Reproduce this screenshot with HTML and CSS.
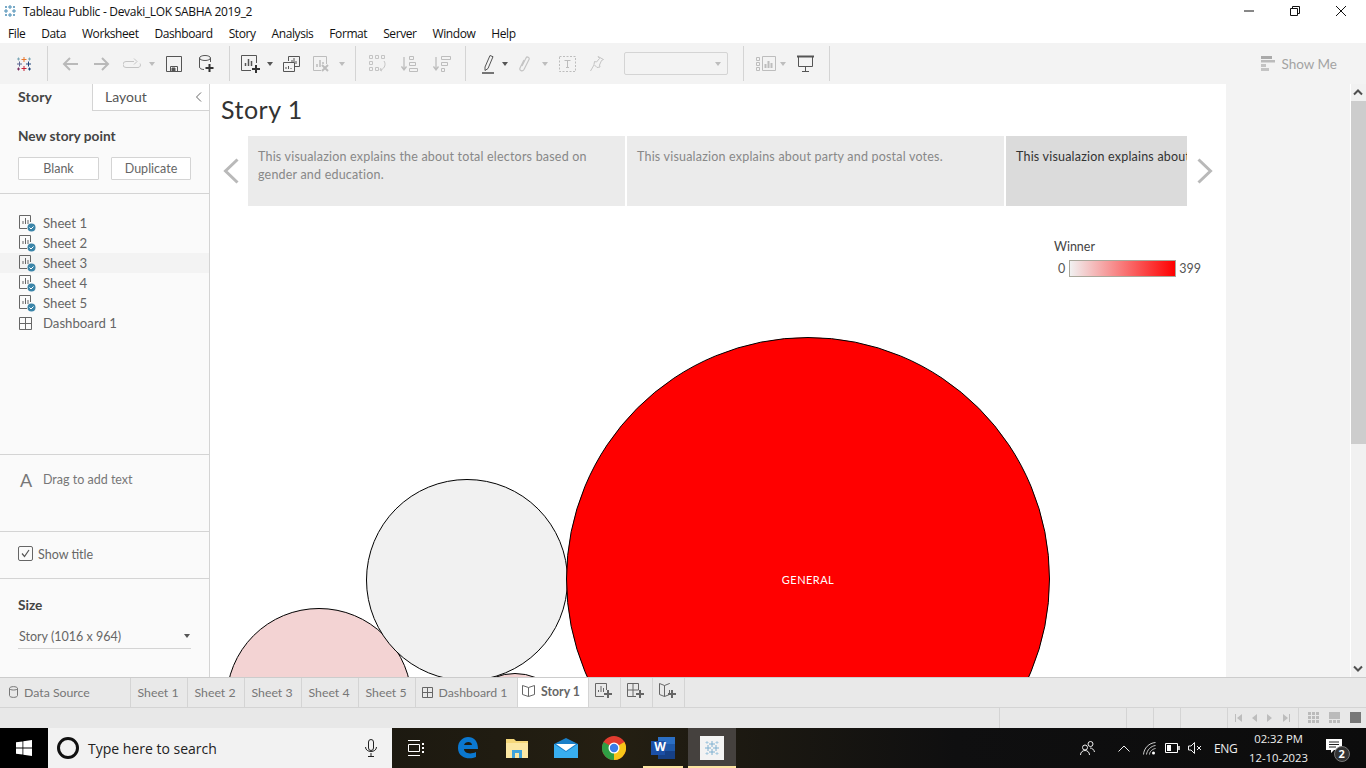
FILE: index.html
```html
<!DOCTYPE html>
<html lang="en">
	<head>
		<title>Tableau Public - Devaki_LOK SABHA 2019_2</title>
		<meta charset="utf-8">
		<link rel="stylesheet" href="styles.css">
	</head>
	<body>
		<!-- title bar -->
		<div class="titlebar">
			<svg class="app-icon" width="14" height="14" viewBox="0 0 14 14"><g stroke="#4a8db5" fill="none"><path d="M7 1v4M5 3h4M7 9v4M5 11h4M1 7h4M3 5v4M9 7h4M11 5v4"/><path d="M3 2v2M2 3h2M11 2v2M10 3h2M3 10v2M2 11h2M11 10v2M10 11h2"/></g></svg>
			<span class="app-title">Tableau Public - Devaki_LOK SABHA 2019_2</span>
			<div class="win-btns">
				<svg width="12" height="12" viewBox="0 0 12 12"><path d="M1 6h10" stroke="#111" fill="none"/></svg>
				<svg width="12" height="12" viewBox="0 0 12 12"><path d="M1.500 3.500h7v7h-7zM3.500 3.500v-2h7v7h-2" stroke="#111" fill="none"/></svg>
				<svg width="12" height="12" viewBox="0 0 12 12"><path d="M1 1l10 10M11 1L1 11" stroke="#111" fill="none"/></svg>
			</div>
		</div>

		<!-- menu -->
		<div class="menubar">
			<span>File</span><span>Data</span><span>Worksheet</span><span>Dashboard</span><span>Story</span><span>Analysis</span><span>Format</span><span>Server</span><span>Window</span><span>Help</span>
		</div>

		<!-- toolbar -->
		<div class="toolbar">
			<svg class="ml15" width="18" height="18" viewBox="0 0 18 18" fill="none"><path d="M9 2v5M6.500 4.500h5" stroke="#e8762b"/><path d="M9 11v5M6.500 13.500h5" stroke="#c72035"/><path d="M2 9h5M4.500 6.500v5" stroke="#5b6591"/><path d="M11 9h5M13.500 6.500v5" stroke="#1f447a"/><path d="M3.500 2.500v3M2 4h3" stroke="#7fa8b8"/><path d="M14.500 2.500v3M13 4h3" stroke="#7fa8b8"/><path d="M3.500 12.500v3M2 14h3" stroke="#7b2d5e"/><path d="M14.500 12.500v3M13 14h3" stroke="#1f447a"/></svg>
			<i class="sep ml14"></i>
			<svg class="ml14" width="16" height="14" viewBox="0 0 16 14" fill="none" stroke="#b9b9b9" stroke-width="2"><path d="M16 7H2M8 1L2 7l6 6"/></svg>
			<svg class="ml16" width="16" height="14" viewBox="0 0 16 14" fill="none" stroke="#b9b9b9" stroke-width="2"><path d="M0 7h14M8 1l6 6-6 6"/></svg>
			<svg class="ml13" width="18" height="12" viewBox="0 0 18 12" fill="none" stroke="#c4c4c4"><path d="M11 3.500H3a3 3 0 0 0 0 6h12a2.500 2.500 0 0 0 2-4"/><path d="M11 .5l3 3-3 3" /></svg>
			<i class="caret off ml8"></i>
			<svg class="ml11" width="16" height="16" viewBox="0 0 16 16" fill="none" stroke="#555"><path d="M.5.5h15v15H.5z"/><path d="M4.500 15.500v-5h7v5" /><path d="M6 12h3v3H6z" fill="#555"/></svg>
			<svg class="ml17" width="15" height="18" viewBox="0 0 15 18" fill="none" stroke="#555"><ellipse cx="6" cy="3" rx="5.500" ry="2.500"/><path d="M.5 3v9c0 1.500 2 2.500 4.500 2.500"/><path d="M11.500 3v4"/><path d="M10.500 9v8M6.500 13h8" stroke="#333" stroke-width="2"/></svg>
			<i class="sep ml15"></i>
			<svg class="ml11" width="20" height="18" viewBox="0 0 20 18" fill="none" stroke="#555"><path d="M10 15.500H.5V.5h15V8"/><path d="M4.500 11V8M7.500 11V4M10.500 11V6" stroke-width="1.500"/><path d="M15 10v8M11 14h8" stroke="#333" stroke-width="2"/></svg>
			<i class="caret ml6"></i>
			<svg class="ml10" width="17" height="16" viewBox="0 0 17 16" fill="none" stroke="#555"><path d="M5.500 5V.5h11v10H12"/><path d="M.5 6.500h11v9H.5z" fill="#f3f3f3"/><path d="M9 6V4M11 6V2M13 8V5M3 13v-2M5.500 13v-3M8 13v-1"/></svg>
			<svg class="ml13" width="16" height="16" viewBox="0 0 16 16" fill="none" stroke="#bdbdbd"><path d="M8 14.500H.5V.5h13V8"/><path d="M4 11V8M7 11V4M10 8V6" stroke-width="1.500"/><path d="M9 9l6 6M15 9l-6 6" stroke-width="2"/></svg>
			<i class="caret off ml10"></i>
			<i class="sep ml10"></i>
			<svg class="ml13" width="17" height="17" viewBox="0 0 17 17" fill="none" stroke="#c4c4c4"><path d="M.5.500h3v3h-3zM6.500.500h3v3h-3zM12.500.500h3v3h-3zM.5 6.500h3v3h-3zM.5 12.500h3v3h-3zM6.500 12.500h3v3h-3z"/><path d="M15 6c2 3 1 7-3 9M12 13l-1 2 2 1"/></svg>
			<svg class="ml15" width="17" height="16" viewBox="0 0 17 16" fill="none" stroke="#bdbdbd"><path d="M3 1v12M.5 10.500L3 14l2.500-3.500" stroke-width="1.300"/><path d="M8.500.5h4v3h-4zM8.500 6.500h6v3h-6zM8.500 12.500h8v3h-8z"/></svg>
			<svg class="ml15" width="18" height="16" viewBox="0 0 18 16" fill="none" stroke="#bdbdbd"><path d="M3 1v12M.5 10.500L3 14l2.500-3.500" stroke-width="1.300"/><path d="M8.500.5h9v3h-9zM8.500 6.500h6v3h-6zM8.500 12.500h3v3h-3z"/></svg>
			<i class="sep ml14"></i>
			<svg class="ml16" width="12" height="20" viewBox="0 0 12 20" fill="none" stroke="#555"><path d="M3 13L8 1.500l3 1.200L6 14.500l-3 2z"/><path d="M0 19h12" stroke-width="1.600"/></svg>
			<i class="caret ml8"></i>
			<svg class="ml11" width="11" height="16" viewBox="0 0 11 16" fill="none" stroke="#c4c4c4" stroke-width="1.200"><path d="M3 10l4-8c1-2 4-.5 3 1.500l-5 10c-1.500 2.500-5 1-4-1.500l4-8"/></svg>
			<i class="caret off ml12"></i>
			<svg class="ml11" width="17" height="16" viewBox="0 0 17 16" fill="none" stroke="#bdbdbd"><path d="M.5.5h16v15H.5z" stroke-dasharray="2 1.500"/><path d="M5.500 4.500h6M8.500 4.500v7M7 11.500h3"/></svg>
			<svg class="ml14" width="14" height="16" viewBox="0 0 14 16" fill="none" stroke="#c4c4c4"><path d="M8 .5l5.500 3-2 1-2 4.500.5 2-3 .5-3-3 .5-3 2 .5 3-3.500zM4 9l-3.500 6"/></svg>
			<div class="combo ml20"><i class="caret off"></i></div>
			<i class="sep ml15"></i>
			<svg class="ml12" width="20" height="16" viewBox="0 0 20 16" fill="none" stroke="#bdbdbd"><path d="M.5 1.500h3v3h-3zM.5 6.500h3v3h-3zM.5 11.500h3v3h-3zM6.500.500h13v14h-13z"/><path d="M9.500 12V8M12.500 12V5M15.500 12V7" stroke-width="2"/></svg>
			<i class="caret off ml4"></i>
			<svg class="ml11" width="17" height="17" viewBox="0 0 17 17" fill="none" stroke="#555"><path d="M0 1.500h17" stroke-width="2"/><path d="M1.500 2v9.500h14V2M8.500 11.500V16M5 16.500h7"/></svg>
			<i class="sep ml15"></i>
			<div class="showme">
				<svg width="14" height="15" viewBox="0 0 14 15"><path d="M0 0h11v3H0z" fill="#aaa"/><path d="M0 4h14v2.500H0z" fill="#bbb"/><path d="M0 8h5v3H0z" fill="#c4c4c4"/><path d="M0 12h8v3H0z" fill="#c4c4c4"/></svg>
				<span>Show Me</span>
			</div>
		</div>

		<!-- main area -->
		<div class="main">
			<div class="sidebar">
				<div class="side-tabs">
					<div class="side-tab active">Story</div>
					<div class="side-tab">Layout <svg width="7" height="10" viewBox="0 0 7 10" fill="none" stroke="#666"><path d="M6 .5L1.500 5 6 9.500"/></svg></div>
				</div>
				<div class="side-sec sec-new">
					<h4>New story point</h4>
					<div class="btn-row">
						<button class="btn blank">Blank</button>
						<button class="btn dup">Duplicate</button>
					</div>
				</div>
				<div class="side-sec sec-list">
					<div class="sheet-item"><svg width="19" height="20" viewBox="0 0 19 20"><use href="#sheet-ico"/></svg>Sheet 1</div>
					<div class="sheet-item"><svg width="19" height="20" viewBox="0 0 19 20"><use href="#sheet-ico"/></svg>Sheet 2</div>
					<div class="sheet-item hover"><svg width="19" height="20" viewBox="0 0 19 20"><use href="#sheet-ico"/></svg>Sheet 3</div>
					<div class="sheet-item"><svg width="19" height="20" viewBox="0 0 19 20"><use href="#sheet-ico"/></svg>Sheet 4</div>
					<div class="sheet-item"><svg width="19" height="20" viewBox="0 0 19 20"><use href="#sheet-ico"/></svg>Sheet 5</div>
					<div class="sheet-item"><svg width="19" height="20" viewBox="0 0 19 20"><path d="M1.500 4.500h12v12h-12zM7.500 4.500v12M1.500 10.500h12" fill="none" stroke="#666"/></svg>Dashboard 1</div>
				</div>
				<div class="side-sec sec-drag">
					<span class="big-a">A</span><span>Drag to add text</span>
				</div>
				<div class="side-sec sec-show">
					<svg width="15" height="15" viewBox="0 0 15 15" fill="none"><rect x=".5" y=".5" width="14" height="14" rx="1.500" stroke="#666"/><path d="M4 7.500l2.500 3L11 4" stroke="#555" stroke-width="1.200"/></svg>
					<span>Show title</span>
				</div>
				<div class="side-sec sec-size">
					<h4>Size</h4>
					<div class="size-sel"><span>Story (1016 x 964)</span><i class="caret"></i></div>
				</div>
			</div>

			<div class="content">
				<h1 class="story-title">Story 1</h1>
				<div class="navigator">
					<svg width="16" height="26" viewBox="0 0 16 26" fill="none" stroke="#b9b9b9" stroke-width="3"><path d="M14.500 1.500L2.500 13l12 11.500"/></svg>
					<div class="points">
						<div class="point">This visualazion explains the about total electors based on gender and education.</div>
						<div class="point">This visualazion explains about party and postal votes.</div>
						<div class="point current">This visualazion explains about</div>
					</div>
					<svg width="16" height="26" viewBox="0 0 16 26" fill="none" stroke="#b9b9b9" stroke-width="3"><path d="M1.500 1.500L13.500 13l-12 11.500"/></svg>
				</div>
				<div class="legend">
					<div class="legend-title">Winner</div>
					<div class="legend-row"><span>0</span><i class="ramp"></i><span>399</span></div>
				</div>
				<div class="bubble b-pink-back"></div>
				<div class="bubble b-pink"></div>
				<div class="bubble b-grey"></div>
				<div class="bubble b-red">GENERAL</div>
			</div>

			<div class="gutter"></div>

			<div class="scrollbar">
				<svg width="16" height="17" viewBox="0 0 16 17" fill="none" stroke="#505050" stroke-width="2"><path d="M4 10.500l4-4 4 4"/></svg>
				<div class="thumb"></div>
				<svg class="down" width="16" height="17" viewBox="0 0 16 17" fill="none" stroke="#505050" stroke-width="2"><path d="M4 6.500l4 4 4-4"/></svg>
			</div>
		</div>

		<!-- sheet tabs -->
		<div class="tabbar">
			<div class="tab ds"><svg width="9" height="12" viewBox="0 0 9 12" fill="none" stroke="#777"><path d="M.5 2.500c0-2.500 8-2.500 8 0v7c0 2.500-8 2.500-8 0zM.5 2.500c0 2 8 2 8 0"/></svg>Data Source</div>
			<div class="tab t1">Sheet 1</div>
			<div class="tab t1">Sheet 2</div>
			<div class="tab t1">Sheet 3</div>
			<div class="tab t1">Sheet 4</div>
			<div class="tab t1">Sheet 5</div>
			<div class="tab dash"><svg width="11" height="11" viewBox="0 0 11 11" fill="none" stroke="#666"><path d="M.5.500h10v10H.5zM5.500.500v10M.5 5.500h10"/></svg>Dashboard 1</div>
			<div class="tab story"><svg width="13" height="12" viewBox="0 0 13 12" fill="none" stroke="#666"><path d="M6.500 2.500L.5.500v9l6 2 6-2v-9zM6.500 2.500v9"/></svg>Story 1</div>
			<div class="tab add"><svg width="20" height="18" viewBox="0 0 20 18" fill="none" stroke="#666"><path d="M9 13.500H.5V.5h11V7"/><path d="M3.500 9V7M6 9V3M8.500 9V5"/><path d="M13 7v8M9 11h8" stroke-width="2"/></svg></div>
			<div class="tab add"><svg width="20" height="18" viewBox="0 0 20 18" fill="none" stroke="#666"><path d="M9 13.500H.5V.5h11V7M6 .5v13M.5 7h11"/><path d="M13 7v8M9 11h8" stroke-width="2"/></svg></div>
			<div class="tab add"><svg width="20" height="18" viewBox="0 0 20 18" fill="none" stroke="#666"><path d="M5.500 2.500L.5.500v11l5 2 5-2V7M10.500 1v-.5l-5 2v11"/><path d="M13 7v8M9 11h8" stroke-width="2"/></svg></div>
		</div>

		<!-- status bar -->
		<div class="statusbar">
			<div class="st-cell grow"></div>
			<div class="st-cell w127"></div>
			<div class="st-cell w27"></div>
			<div class="st-cell w27"></div>
			<div class="st-cell w48"></div>
			<div class="st-cell nav">
				<svg width="56" height="10" viewBox="0 0 56 10" fill="#bdbdbd"><path d="M0 1h1v8H0zM7 1v8L2 5zM22 1v8l-5-4zM32 1v8l5-4zM48 1v8l5-4zM54 1h1v8h-1z"/></svg>
			</div>
			<div class="st-cell views">
				<svg width="54" height="12" viewBox="0 0 54 12"><path d="M0 0h3v3H0zM4 0h3v3H4zM8 0h3v3H8zM0 4h3v3H0zM4 4h3v3H4zM8 4h3v3H8zM0 8h3v3H0zM4 8h3v3H4zM8 8h3v3H8z" fill="#bbb"/><path d="M21 0h11v7H21zM21 8h3v3h-3zM25 8h3v3h-3zM29 8h3v3h-3z" fill="#bbb"/><path d="M42 0h11v11H42z" fill="#777"/></svg>
			</div>
		</div>

		<!-- windows taskbar -->
		<div class="taskbar">
			<div class="start"><svg width="16" height="16" viewBox="0 0 16 16" fill="#fff"><path d="M0 2.300l6.500-.9v6.200H0zM7.300 1.300L16 0v7.600H7.300zM0 8.400h6.500v6.200L0 13.700zM7.300 8.400H16V16l-8.700-1.300z"/></svg></div>
			<div class="search">
				<i class="cortana"></i>
				<span>Type here to search</span>
				<svg width="12" height="18" viewBox="0 0 12 18" fill="none" stroke="#222"><rect x="3.500" y=".5" width="5" height="11" rx="2.500"/><path d="M.5 8c0 6 11 6 11 0M6 14v3M3 17.500h6"/></svg>
			</div>
			<div class="task-icons">
				<div class="task"><svg width="18" height="16" viewBox="0 0 18 16" fill="none" stroke="#fff"><path d="M1 .5h12M1 15.500h12M1.500 4.500h11v7h-11z"/><path d="M16 3v2M16 7v2M16 11v2" stroke-width="2"/></svg></div>
				<div class="task edge"><svg width="21" height="22" viewBox="0 0 21 22"><path d="M1 11C1 4 6 0 11 0c6 0 10 4 10 12H7c0 4 6 6 12 3v5c-7 3-18 1-18-9z M7 8h8c0-4-7-4-8 0z" fill="#0b78d0" fill-rule="evenodd"/></svg></div>
				<div class="task"><svg width="22" height="20" viewBox="0 0 22 20"><path d="M0 1h8l2 2h12v17H0z" fill="#f4d77a"/><path d="M0 5h22v15H0z" fill="#fbe7a3"/><path d="M6 12h10v8H6z" fill="#3fa4dc"/><path d="M9 15h4v5H9z" fill="#fbe7a3"/></svg></div>
				<div class="task"><svg width="24" height="20" viewBox="0 0 24 20"><path d="M0 6l12-6 12 6v14H0z" fill="#1a7fc8"/><path d="M0 6l12 8 12-8v14H0z" fill="#38aef0"/><path d="M2 6h20l-10 7z" fill="#fff"/></svg></div>
				<div class="task"><svg width="24" height="24" viewBox="0 0 24 24"><circle cx="12" cy="12" r="12" fill="#e23c2f"/><path d="M12 12L22.400 6A12 12 0 0 1 12 24z" fill="#f7c518"/><path d="M12 12L12 24A12 12 0 0 1 1.600 6z" fill="#2f9e44"/><circle cx="12" cy="12" r="5.500" fill="#fff"/><circle cx="12" cy="12" r="4.200" fill="#3b7de8"/></svg></div>
				<div class="task word"><svg width="24" height="22" viewBox="0 0 24 22"><path d="M7 0h17v22H7z" fill="#2b6fc4"/><path d="M7 7h17v7H7z" fill="#1e58a8"/><path d="M7 14h17v8H7z" fill="#164086"/><path d="M0 4h14v14H0z" fill="#1b4fa6"/></svg><span class="word-w">W</span></div>
				<div class="task active"><span class="tb-tile"><svg width="20" height="20" viewBox="0 0 20 20" fill="none" stroke="#7fb0d0"><path d="M10 3v6M7 6h6M10 11v6M7 14h6M3 10h6M6 7v6M11 10h6M14 7v6"/><path d="M5 3v3M3.500 4.500h3M15 3v3M13.500 4.500h3M5 14v3M3.500 15.500h3M15 14v3M13.500 15.500h3" stroke="#a9cbe0"/></svg></span></div>
			</div>
			<div class="tray">
				<svg width="16" height="16" viewBox="0 0 16 16" fill="none" stroke="#eee"><circle cx="10.500" cy="4" r="2.500"/><circle cx="5" cy="7.500" r="2.500"/><path d="M.5 15c0-6 9-6 9 0M10 8c2 0 4 1.500 4.500 4"/></svg>
				<svg class="ml22" width="12" height="7" viewBox="0 0 12 7" fill="none" stroke="#eee"><path d="M.5 6.500L6 1l5.500 5.500"/></svg>
				<svg class="ml13" width="13" height="13" viewBox="0 0 13 13" fill="none" stroke="#ccc"><path d="M.5 12.500C1 6 6 1 12.500.5M3.500 12.500C4 8 8 4 12.500 3.500M6.500 12.500c0-3 3-5.500 6-6"/><circle cx="10.500" cy="11" r="1.500" fill="#fff" stroke="none"/></svg>
				<svg class="ml9" width="15" height="10" viewBox="0 0 15 10" fill="none" stroke="#fff"><path d="M.5.500h12v9H.5z"/><path d="M2 2h4v6H2z" fill="#fff" stroke="none"/><path d="M14 3v4" stroke-width="1.500"/></svg>
				<svg class="ml8" width="14" height="12" viewBox="0 0 14 12" fill="none" stroke="#eee"><path d="M.5 4v4H3l3.500 3.500V.5L3 4z"/><path d="M9 4l4 4M13 4l-4 4"/></svg>
				<span class="lang">ENG</span>
				<div class="clock"><span>02:32 PM</span><span>12-10-2023</span></div>
				<div class="notif">
					<svg width="16" height="14" viewBox="0 0 16 14"><path d="M0 0h16v11h-8l-3 3v-3H0z" fill="#fff"/><path d="M3 3h10M3 5.500h10M3 8h7" stroke="#222"/></svg>
					<span class="notif-count">2</span>
				</div>
			</div>
		</div>

		<!-- shared icons -->
		<svg class="defs" width="0" height="0">
			<symbol id="sheet-ico" viewBox="0 0 19 20">
				<path d="M9 15.500H1.500V2.500h11V9" fill="none" stroke="#666"/>
				<path d="M5 11V8M7.500 11V5M10 11V7" stroke="#666"/>
				<circle cx="13.500" cy="14.500" r="4" fill="#3a84a8"/>
				<path d="M11.500 14.500l1.500 1.500 2.500-2.500" fill="none" stroke="#fff"/>
			</symbol>
		</svg>
	</body>
</html>
```

FILE: styles.css
```css
/*
 * RESET
 */
* { margin: 0; padding: 0; box-sizing: border-box; }
html, body { height: 100%; overflow: hidden; }
body { width: 1366px; height: 768px; display: flex; flex-direction: column; background: #fff; font-family: Lato, "Liberation Sans", sans-serif; color: #555; font-size: 12.500px; }
svg { display: block; flex: none; }
i { display: block; font-style: normal; }
.defs { position: absolute; }

/*
 * SPACING HELPERS (toolbar and tray)
 */
.ml4 { margin-left: 4px; }
.ml6 { margin-left: 6px; }
.ml8 { margin-left: 8px; }
.ml9 { margin-left: 9px; }
.ml10 { margin-left: 10px; }
.ml11 { margin-left: 11px; }
.ml12 { margin-left: 12px; }
.ml13 { margin-left: 13px; }
.ml14 { margin-left: 14px; }
.ml15 { margin-left: 15px; }
.ml16 { margin-left: 16px; }
.ml17 { margin-left: 17px; }
.ml20 { margin-left: 20px; }
.ml22 { margin-left: 22px; }

/*
 * TITLE AND MENU
 */
.titlebar { height: 22px; display: flex; align-items: center; padding-left: 3px; font-family: "Open Sans", sans-serif; font-size: 12px; color: #111; }
.app-title { margin-left: 6px; letter-spacing: -.3px; }
.win-btns { margin-left: auto; display: flex; gap: 34px; padding-right: 19px; }

.menubar { height: 21px; padding: 1px 0 0 8px; display: flex; align-items: center; gap: 16px; font-family: "Open Sans", sans-serif; font-size: 12px; color: #111; letter-spacing: -.42px; }

/*
 * TOOLBAR
 */
.toolbar { height: 41px; display: flex; align-items: center; background: #f3f3f3; }
.sep { width: 1px; height: 35px; background: #d4d4d4; }
.caret { width: 0; height: 0; border-left: 3px solid transparent; border-right: 3px solid transparent; border-top: 4px solid #555; }
.caret.off { border-top-color: #bdbdbd; }
.combo { width: 104px; height: 23px; border: 1px solid #d4d4d4; border-radius: 2px; display: flex; align-items: center; justify-content: flex-end; padding-right: 6px; }
.showme { margin-left: auto; padding-right: 29px; display: flex; align-items: center; gap: 6px; font-size: 13.500px; color: #a3a3a3; }

/*
 * MAIN
 */
.main { height: 593px; display: flex; }

.sidebar { width: 210px; background: #fafafa; border-right: 1px solid #d4d4d4; display: flex; flex-direction: column; }
.side-tabs { height: 27px; display: flex; }
.side-tab { font-size: 14px; line-height: 26px; }
.side-tab.active { width: 92px; padding-left: 18px; font-weight: 700; color: #444; letter-spacing: .2px; }
.side-tab:not(.active) { flex: 1; padding-left: 12px; border-left: 1px solid #d4d4d4; border-bottom: 1px solid #d4d4d4; background: #fff; display: flex; align-items: center; justify-content: space-between; padding-right: 7px; }

.side-sec { border-bottom: 1px solid #d4d4d4; padding-left: 18px; }
.side-sec h4 { font-size: 13.700px; font-weight: 700; color: #444; }
.sec-new { height: 83px; padding-top: 16px; }
.btn-row { display: flex; gap: 12px; margin-top: 13px; }
.btn { height: 23px; padding-bottom: 1px; background: #fff; border: 1px solid #d4d4d4; border-radius: 1px; font: 12.500px Lato, sans-serif; color: #666; }
.btn.blank { width: 81px; }
.btn.dup { width: 80px; }

.sec-list { height: 261px; padding: 19px 0 0; }
.sheet-item { height: 20px; padding: 1px 0 1px 18px; display: flex; align-items: center; gap: 6px; font-size: 13.200px; color: #666; }
.sheet-item.hover { background: #f3f3f3; }

.sec-drag { height: 77px; padding-top: 15px; display: flex; gap: 12px; color: #777; }
.sec-drag span:last-child { margin-top: 2px; }
.big-a { width: 13px; padding-left: 2px; font-size: 18px; line-height: 20px; }

.sec-show { height: 47px; display: flex; align-items: center; gap: 5px; color: #666; padding-bottom: 2px; }
.sec-show svg { margin-bottom: 1px; }

.sec-size { flex: 1; border-bottom: none; padding-top: 17px; }
.size-sel { width: 173px; height: 25px; margin-top: 11px; border-bottom: 1px solid #d4d4d4; display: flex; align-items: center; justify-content: space-between; padding: 0 1px; color: #666; }

/*
 * STORY CONTENT
 */
.content { width: 1016px; background: #fff; position: relative; overflow: hidden; }
.story-title { font-size: 25px; font-weight: 400; color: #333; line-height: 30px; letter-spacing: .5px; padding: 10px 0 0 11px; height: 52px; }
.navigator { display: flex; align-items: center; padding-left: 13px; }
.points { display: flex; gap: 2px; width: 939px; margin: 0 10px 0 9px; overflow: hidden; }
.point { flex: none; width: 377px; height: 70px; padding: 12px 10px; background: #ebebeb; font-size: 12.500px; line-height: 18px; letter-spacing: .2px; color: #888; }
.point.current { width: 181px; background: #dbdbdb; color: #333; overflow: hidden; white-space: nowrap; }

.legend { position: absolute; top: 155px; left: 844px; color: #555; }
.legend-title { color: #444; }
.legend-row { margin-top: 6px; display: flex; align-items: center; gap: 3px; }
.legend-row span:first-child { margin-left: 4px; }
.ramp { width: 107px; height: 17px; margin-left: 1px; border: 1px solid #a9a79b; background: linear-gradient(to right, #f1f1f1, #ff0000); }

.bubble { position: absolute; border-radius: 50%; border: 1px solid #000; display: flex; align-items: center; justify-content: center; }
.b-red { left: 356px; top: 253px; width: 484px; height: 484px; background: #ff0000; color: #fff; font-size: 11px; letter-spacing: .45px; }
.b-grey { left: 156px; top: 395px; width: 202px; height: 202px; background: #f1f1f1; }
.b-pink { left: 16px; top: 524px; width: 186px; height: 186px; background: #f3d3d3; }
.b-pink-back { left: 250px; top: 589px; width: 110px; height: 110px; background: #f3d3d3; }

.gutter { width: 124px; background: #f3f3f3; }
.scrollbar { width: 16px; background: #f1f1f1; display: flex; flex-direction: column; border-left: 1px solid #fff; }
.scrollbar svg { margin-left: -1px; }
.thumb { height: 343px; background: #cdcdcd; }
.scrollbar .down { margin-top: auto; }

/*
 * SHEET TABS
 */
.tabbar { height: 31px; display: flex; background: #e9e9e9; border-top: 1px solid #ccc; border-bottom: 1px solid #d4d4d4; }
.tab { display: flex; align-items: center; justify-content: center; gap: 6px; border-right: 1px solid #d4d4d4; color: #777; font-size: 12.300px; padding-bottom: 1px; }
.tab.ds { width: 131px; justify-content: flex-start; padding-left: 9px; }
.tab.t1 { width: 57px; padding-right: 2px; }
.tab.dash { width: 102px; padding-right: 4px; }
.tab.story { width: 71px; background: #fff; font-weight: 700; color: #666; padding: 0 4px 3px 0; }
.tab.add { width: 32px; }

/*
 * STATUS BAR
 */
.statusbar { height: 20px; display: flex; background: #e8e8e8; }
.st-cell { border-left: 1px solid #d4d4d4; }
.st-cell.grow { width: 999px; border-left: none; }
.w127 { width: 127px; }
.w27 { width: 27px; }
.w48 { width: 47px; }
.st-cell.nav { width: 71px; display: flex; align-items: center; padding-left: 7px; }
.st-cell.views { flex: 1; display: flex; align-items: center; padding-left: 9px; }

/*
 * TASKBAR
 */
.taskbar { height: 40px; display: flex; background: linear-gradient(to right, #0f0f0d, #241f12 45%, #0f0f10 70%, #0c0c0c); color: #eee; font-family: "Open Sans", sans-serif; }
.start { width: 48px; background: #000; display: flex; align-items: center; justify-content: center; }
.search { width: 344px; background: #f2f2f2; display: flex; align-items: center; padding-left: 9px; color: #222; font-size: 14px; }
.search svg { margin-left: auto; margin-right: 15px; }
.search span { margin-left: 9px; }
.cortana { width: 22px; height: 22px; border-radius: 50%; border: 3px solid #111; }
.task-icons { display: flex; gap: .8px; }
.task { width: 48px; display: flex; align-items: center; justify-content: center; position: relative; }
.task.edge { margin-left: 3.200px; }
.task.word::after { content: ""; position: absolute; left: 4px; right: 4px; bottom: 0; height: 2px; background: #fbe4a0; }
.task.active { background: #45413e; }
.task.active::after { content: ""; position: absolute; left: 0; right: 0; bottom: 0; height: 2px; background: #fbe4a0; }
.word-w { position: absolute; left: 15px; top: 12px; color: #fff; font-size: 12px; font-weight: 700; line-height: 14px; }
.tb-tile { width: 24px; height: 24px; background: #f3f3f3; display: flex; align-items: center; justify-content: center; }
.tray { margin-left: auto; width: 286px; display: flex; align-items: center; }
.lang { margin-left: 12px; font-size: 12px; letter-spacing: -.3px; }
.clock { margin-left: 11px; width: 60px; display: flex; flex-direction: column; align-items: center; font-size: 11.300px; line-height: 19px; white-space: nowrap; }
.notif { margin-left: 17px; position: relative; margin-top: -4px; }
.notif-count { position: absolute; left: 8px; top: 7px; width: 16px; height: 16px; border-radius: 50%; background: #333; border: 1px solid #777; font-size: 11px; font-weight: 700; line-height: 14px; text-align: center; color: #fff; }
```
